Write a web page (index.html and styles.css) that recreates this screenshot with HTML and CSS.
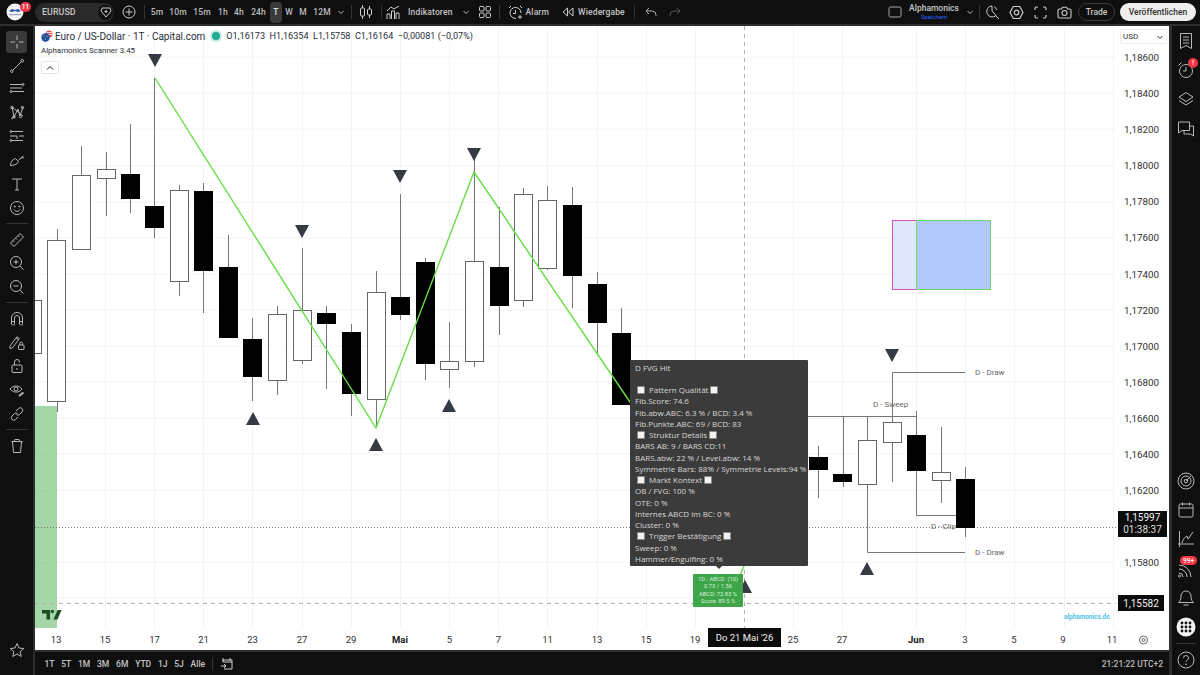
FILE: index.html
```html
<!DOCTYPE html>
<html lang="de">
<head>
<meta charset="utf-8">
<title>EURUSD Chart</title>
<link rel="stylesheet" href="styles.css">
</head>
<body>
<div class="app">
  <header class="topbar">
    <div class="logo">
      <svg class="logo-img" viewBox="0 0 18 18"><circle cx="9" cy="9" r="8.5" fill="#f2f2f2"/><path d="M3 8l3-2 3 1 3-1 3 2-3 1-3-1-3 1z" fill="#2b56b8"/><rect x="3" y="11" width="12" height="1.2" fill="#9aa6c8"/></svg>
      <span class="badge logo-badge">11</span>
    </div>
    <div class="sym">
      <span class="sym-name">EURUSD</span>
      <span class="sym-btn"><svg width="12" height="12" viewBox="0 0 12 12" fill="none" stroke="#ccc"><path d="M2 2h8l1 3-5 6-5-6z"/><path d="M4.5 5.5h3M6 4v3"/></svg></span>
    </div>
    <svg class="plus" width="14" height="14" viewBox="0 0 14 14" fill="none" stroke="#ccc"><circle cx="7" cy="7" r="6"/><path d="M7 3.5v7M3.5 7h7"/></svg>
    <span class="sep s-tf"></span>
    <nav class="tfs">
      <span class="tf w20">5m</span><span class="tf w22">10m</span><span class="tf w26">15m</span><span class="tf w16">1h</span><span class="tf w16">4h</span><span class="tf w23">24h</span><span class="tf w12 active">T</span><span class="tf w14">W</span><span class="tf w14">M</span><span class="tf w24">12M</span>
      <span class="tf w14"><svg class="chev" viewBox="0 0 8 8" fill="none" stroke="#bbb"><path d="M1.5 3l2.500 2.500 2.500-2.500"/></svg></span>
    </nav>
    <span class="sep s3"></span>
    <svg class="ic m6" width="16" height="16" viewBox="0 0 16 16" fill="none" stroke="#ccc"><path d="M4.500 1v3M4.500 12v3M11.500 2v3M11.500 11v3"/><rect x="2.500" y="4" width="4" height="8" rx="1"/><rect x="9.500" y="5" width="4" height="6" rx="1"/></svg>
    <span class="sep s7"></span>
    <svg class="ic m4" width="15" height="15" viewBox="0 0 15 15" fill="none" stroke="#ccc"><path d="M1 14V9h3v5M5.500 14V6h3v8M10 14V8h3v6"/><path d="M1 6l4-4 3 2 5-3"/></svg>
    <span class="lbl l7">Indikatoren</span>
    <svg class="chev m9" viewBox="0 0 8 8" fill="none" stroke="#bbb"><path d="M1.500 3l2.500 2.500 2.500-2.500"/></svg>
    <svg class="ic m8" width="14" height="14" viewBox="0 0 14 14" fill="none" stroke="#ccc"><rect x="1.500" y="1.500" width="4.500" height="4.500" rx="1"/><rect x="8" y="1.500" width="4.500" height="4.500" rx="1"/><rect x="1.500" y="8" width="4.500" height="4.500" rx="1"/><rect x="8" y="8" width="4.500" height="4.500" rx="1"/></svg>
    <span class="sep s7"></span>
    <svg class="ic m8" width="15" height="15" viewBox="0 0 15 15" fill="none" stroke="#ccc"><path d="M8 13.400A5.500 5.500 0 1 1 13 8"/><path d="M7.500 5v3.500H5M1 3l2-2M14 3l-2-2M12 10v4M10 12h4"/></svg>
    <span class="lbl l3">Alarm</span>
    <svg class="ic m13" width="12" height="12" viewBox="0 0 12 12" fill="none" stroke="#ccc"><path d="M5.500 2L1 6l4.500 4zM11 2L6.500 6l4.500 4z"/></svg>
    <span class="lbl l4">Wiedergabe</span>
    <span class="sep s9"></span>
    <svg class="ic m9" width="14" height="14" viewBox="0 0 14 14" fill="none" stroke="#aaa"><path d="M5 3L2 6l3 3M2 6h6a4 4 0 0 1 4 4v1"/></svg>
    <svg class="ic m10" width="14" height="14" viewBox="0 0 14 14" fill="none" stroke="#555"><path d="M9 3l3 3-3 3M12 6H6a4 4 0 0 0-4 4v1"/></svg>
    <div class="top-right">
      <svg class="ic" width="14" height="12" viewBox="0 0 14 12" fill="none" stroke="#aaa"><rect x="1" y="1" width="12" height="10" rx="1.500"/></svg>
      <div class="layout-name"><span class="ln-main">Alphamonics</span><span class="ln-sub">Speichern</span></div>
      <svg class="chev" viewBox="0 0 8 8" fill="none" stroke="#bbb"><path d="M1.500 3l2.500 2.500 2.500-2.500"/></svg>
      <span class="sep s5"></span>
      <span class="ib"><svg width="15" height="15" viewBox="0 0 15 15" fill="none" stroke="#ccc"><path d="M7 1a5.500 5.500 0 1 0 4 9.500M7 1v5l4 4.500M9.500 1.500L12 5M10.500 10.500l3.500 3.500"/></svg></span>
      <span class="ib"><svg width="15" height="15" viewBox="0 0 15 15" fill="none" stroke="#ccc" stroke-width="1.200"><path d="M4.300 1.500h6.400l3.300 6-3.300 6H4.300L1 7.500z"/><circle cx="7.500" cy="7.500" r="2.300"/></svg></span>
      <span class="ib"><svg width="13" height="13" viewBox="0 0 13 13" fill="none" stroke="#ccc" stroke-width="1.200"><path d="M1 4V2.500A1.500 1.500 0 0 1 2.500 1H4M9 1h1.500A1.500 1.500 0 0 1 12 2.500V4M12 9v1.500a1.500 1.500 0 0 1-1.500 1.500H9M4 12H2.500A1.500 1.500 0 0 1 1 10.500V9"/></svg></span>
      <span class="ib"><svg width="15" height="13" viewBox="0 0 15 13" fill="none" stroke="#ccc" stroke-width="1.100"><path d="M1 4.500A1.500 1.500 0 0 1 2.500 3H4.500L5.500 1.200h4L10.500 3h2A1.500 1.500 0 0 1 14 4.500v6a1.500 1.500 0 0 1-1.500 1.500h-10A1.500 1.500 0 0 1 1 10.500z"/><circle cx="7.500" cy="7" r="2.500"/></svg></span>
      <span class="pill trade">Trade</span>
      <span class="pill publish">Veröffentlichen</span>
    </div>
  </header>

  <aside class="left">
    <span class="tool active"><svg viewBox="0 0 16 16" class="ti"><path d="M8 1.500v4.500M8 10v4.500M1.500 8H6M10 8h4.500"/></svg></span>
    <span class="tool"><svg viewBox="0 0 16 16" class="ti"><path d="M3.500 12.500l9-9"/><circle cx="2.800" cy="13.200" r="1.300"/><circle cx="13.200" cy="2.800" r="1.300"/></svg></span>
    <span class="tool"><svg viewBox="0 0 16 16" class="ti"><path d="M1 3.500h12M1 7h12M3 10.500h12"/><circle cx="14" cy="3.500" r="1"/><circle cx="2" cy="10.500" r="1"/></svg></span>
    <span class="tool"><svg viewBox="0 0 16 16" class="ti"><path d="M3 2l2 10 4-8 2 7 3-9M3 2l11 9M5 12L2 14"/><circle cx="3" cy="2.500" r="1.200"/><circle cx="13.500" cy="2.500" r="1.200"/><circle cx="5" cy="12" r="1.200"/><circle cx="11.500" cy="11.500" r="1.200"/></svg></span>
    <span class="tool"><svg viewBox="0 0 16 16" class="ti"><path d="M3 2.500h11M1 7h7M10 7h5M3 11.500h11M8 7v3"/><circle cx="2" cy="2.500" r="1"/><circle cx="2" cy="11.500" r="1"/></svg></span>
    <span class="tool"><svg viewBox="0 0 16 16" class="ti"><path d="M1.500 13.500c0-3 1.500-6 5-7l3 3c-1 3-5 4-8 4zM9.500 8l5-4M12 6c1-.5 2-.5 3 0"/></svg></span>
    <span class="tool"><svg viewBox="0 0 16 16" class="ti"><path d="M3 3h10M8 3v11M6 14h4"/></svg></span>
    <span class="tool"><svg viewBox="0 0 16 16" class="ti"><circle cx="8" cy="8" r="6.500"/><circle cx="5.800" cy="6.500" r=".6"/><circle cx="10.200" cy="6.500" r=".6"/><path d="M5 9.500c1.500 2.500 4.500 2.500 6 0"/></svg></span>
    <span class="tsep"></span>
    <span class="tool"><svg viewBox="0 0 16 16" class="ti"><path d="M1.500 11l9.500-9.500 3.500 3.500L5 14.500zM4 8.500l1.500 1.500M6.500 6l1.500 1.500M9 3.500L10.500 5"/></svg></span>
    <span class="tool"><svg viewBox="0 0 16 16" class="ti"><circle cx="7" cy="7" r="5.500"/><path d="M11 11l3.500 3.500M4.500 7h5M7 4.500v5"/></svg></span>
    <span class="tool"><svg viewBox="0 0 16 16" class="ti"><circle cx="7" cy="7" r="5.500"/><path d="M11 11l3.500 3.500M4.500 7h5"/></svg></span>
    <span class="tsep"></span>
    <span class="tool"><svg viewBox="0 0 16 16" class="ti"><path d="M2.500 13V7a5.500 5.500 0 0 1 11 0v6M5.500 13V7a2.500 2.500 0 0 1 5 0v6M2.500 10.500h3M10.500 10.500h3M3 13v1.500M5 13v1.500M11 13v1.500M13 13v1.500"/></svg></span>
    <span class="tool"><svg viewBox="0 0 16 16" class="ti"><path d="M1 11L7 3l2.500 1.800-6 8L1 13.500zM7 3l1-1.200 2.500 1.800-1 1.200"/><rect x="9.500" y="10" width="5.500" height="4.500" rx=".7"/><path d="M10.800 10V8.500a1.400 1.400 0 0 1 2.800 0V10"/></svg></span>
    <span class="tool"><svg viewBox="0 0 16 16" class="ti"><rect x="3" y="7" width="10" height="7.500" rx="1"/><path d="M5.500 7V4a2.500 2.500 0 0 1 5 0v.5M8 10v2"/></svg></span>
    <span class="tool"><svg viewBox="0 0 16 16" class="ti"><path d="M1 7c3-4 9-4 12 0-1 1.500-2.500 2.500-4.500 3-2.500.5-5.500-.5-7.500-3z"/><circle cx="7" cy="7" r="2"/><path d="M10 14l4.500-3.500" stroke-width="2"/></svg></span>
    <span class="tool"><svg viewBox="0 0 16 16" class="ti"><path d="M7 5l2.500-2.500a2.300 2.300 0 0 1 3.500 3.500L10.500 8.500a2.300 2.300 0 0 1-3 0M9 11l-2.500 2.500A2.300 2.300 0 0 1 3 10l2.500-2.500a2.300 2.300 0 0 1 3 0"/></svg></span>
    <span class="tsep"></span>
    <span class="tool"><svg viewBox="0 0 16 16" class="ti"><path d="M2.500 3.500h11M5.500 3.500V2.200A.7.700 0 0 1 6.200 1.500h3.600a.7.700 0 0 1 .7.700v1.300M3.500 3.500l1 11h7l1-11"/></svg></span>
    <span class="tool star"><svg viewBox="0 0 16 16" class="ti"><path d="M8 1.500l2 4.500 4.800.5-3.600 3.200 1 4.800L8 12l-4.200 2.500 1-4.800L1.200 6.500 6 6z"/></svg></span>
  </aside>

  <main class="chart">
    <svg class="plot" viewBox="35 26 1134 624" xmlns="http://www.w3.org/2000/svg">
      <g class="grid">
        <path d="M35 57H1116M35 93H1116M35 129H1116M35 166H1116M35 202H1116M35 238H1116M35 274H1116M35 310H1116M35 346H1116M35 382H1116M35 418H1116M35 454H1116M35 490H1116M35 562H1116M35 598H1116"/>
        <path d="M105.500 26V628M154.500 26V628M203.500 26V628M252.500 26V628M302.500 26V628M351.500 26V628M400.500 26V628M449.500 26V628M498.500 26V628M547.500 26V628M597.500 26V628M646.500 26V628M695.500 26V628M793.500 26V628M842.500 26V628M916.500 26V628M965.500 26V628M1014.500 26V628M1064.500 26V628M1113.500 26V628"/>
      </g>
      <rect class="zone" x="35" y="406" width="22" height="222"/>
      <path class="zone-line" d="M35 454H57M35 491H57M35 563H57"/>
      <path class="lastline" d="M35 527.500H1116"/>
      <path class="cross" d="M744.500 26V628M35 603.500H1116"/>

      <g class="rects">
        <rect class="r1" x="892.500" y="220.500" width="24" height="69"/>
        <rect class="r2" x="916.500" y="220.500" width="74" height="69"/>
      </g>

      <path class="wick" d="M32.500 280V300M32.500 354V380M57.500 229V240M57.500 401V412M81.500 146V175M106.500 152V169M106.500 178V216M130.500 124V174M130.500 199V213M154.500 78V206M154.500 228V238M179.500 185V190M179.500 281V296M203.500 183V191M203.500 271V313M228.500 235V267M252.500 318V339M252.500 377V401M277.500 306V314M277.500 380V395M302.500 248V310M302.500 360V364M326.500 306V313M326.500 324V389M351.500 324V332M351.500 394V416M376.500 271V292M376.500 399V426M400.500 194V297M400.500 315V320M425.500 258V262M425.500 364V380M449.500 322V361M449.500 369V388M474.500 157V261M474.500 361V367M499.500 207V267M499.500 306V335M523.500 188V194M523.500 300V307M547.500 186V200M547.500 268V270M572.500 187V205M572.500 276V308M597.500 272V284M597.500 323V353M621.500 308V333M818.500 446V457M818.500 470V498M843.500 417V474M843.500 482V487M867.500 417V440M867.500 485V552.500H965M892.500 372.500V422M892.500 442V482M916.500 411V435M916.500 471V515.500H965M941.500 427V472M941.500 480V503M965.500 467V479M965.500 528V537M892.500 372.500H965M808 416.500H916"/>

      <g class="up">
        <rect x="24.500" y="300.500" width="17" height="53"/>
        <rect x="47.500" y="240.500" width="18" height="161"/>
        <rect x="72.500" y="175.500" width="18" height="74"/>
        <rect x="97.500" y="169.500" width="18" height="9"/>
        <rect x="170.500" y="190.500" width="18" height="91"/>
        <rect x="268.500" y="314.500" width="18" height="66"/>
        <rect x="293.500" y="310.500" width="18" height="50"/>
        <rect x="367.500" y="292.500" width="18" height="107"/>
        <rect x="440.500" y="361.500" width="18" height="8"/>
        <rect x="465.500" y="261.500" width="18" height="100"/>
        <rect x="514.500" y="194.500" width="18" height="106"/>
        <rect x="538.500" y="200.500" width="18" height="68"/>
        <rect x="858.500" y="440.500" width="18" height="44"/>
        <rect x="883.500" y="422.500" width="18" height="20"/>
        <rect x="932.500" y="472.500" width="18" height="8"/>
      </g>
      <g class="dn">
        <rect x="121" y="174" width="19" height="25"/>
        <rect x="145" y="206" width="19" height="22"/>
        <rect x="194" y="191" width="19" height="80"/>
        <rect x="219" y="267" width="19" height="71"/>
        <rect x="243" y="339" width="19" height="38"/>
        <rect x="317" y="313" width="19" height="11"/>
        <rect x="342" y="332" width="19" height="62"/>
        <rect x="391" y="297" width="19" height="18"/>
        <rect x="416" y="262" width="19" height="102"/>
        <rect x="490" y="267" width="19" height="39"/>
        <rect x="563" y="205" width="19" height="71"/>
        <rect x="588" y="284" width="19" height="39"/>
        <rect x="612" y="333" width="19" height="72"/>
        <rect x="809" y="457" width="19" height="13"/>
        <rect x="833" y="474" width="19" height="8"/>
        <rect x="907" y="435" width="19" height="36"/>
        <rect x="956" y="479" width="19" height="49"/>
      </g>

      <path class="zig" d="M155 78L376 428L474 172L632 405L744 566L740 575"/>

      <g class="tri">
        <path d="M148 54h14l-7 13z"/><path d="M295 225h14l-7 13z"/><path d="M393 170h14l-7 13z"/><path d="M467 148h14l-7 13z"/><path d="M885 349h14l-7 13z"/>
        <path d="M246 425h14l-7-13z"/><path d="M369 451h14l-7-13z"/><path d="M442 412h14l-7-13z"/><path d="M738 593h14l-7-13z"/><path d="M860 575h14l-7-13z"/>
      </g>

      <path class="tvlogo" d="M42 610h8v9.500h-3.500V613.500H42zM50.500 611.500a1.800 1.800 0 1 0 3.600 0a1.800 1.800 0 1 0-3.600 0zM57.500 610H61.500L57.500 619.500H53.500z"/>

      <g class="draws">
        <text x="975" y="375">D - Draw</text>
        <text x="975" y="555">D - Draw</text>
        <text x="873" y="407">D - Sweep</text>
        <text x="931" y="529">D - Clip</text>
      </g>
      <rect x="956" y="479" width="19" height="49" class="dn-top"/>
      <text class="brand" x="1064" y="619">alphamonics.de</text>

      <g class="prices">
        <text x="1124" y="60.500">1,18600</text><text x="1124" y="96.500">1,18400</text><text x="1124" y="132.500">1,18200</text><text x="1124" y="169">1,18000</text><text x="1124" y="205">1,17800</text><text x="1124" y="241">1,17600</text><text x="1124" y="277.500">1,17400</text><text x="1124" y="313.500">1,17200</text><text x="1124" y="349.500">1,17000</text><text x="1124" y="385.500">1,16800</text><text x="1124" y="421.500">1,16600</text><text x="1124" y="457.500">1,16400</text><text x="1124" y="493.500">1,16200</text><text x="1124" y="565.500">1,15800</text>
      </g>
      <g class="dates">
        <text x="56" y="643">13</text><text x="105" y="643">15</text><text x="154.500" y="643">17</text><text x="203.500" y="643">21</text><text x="252.500" y="643">23</text><text x="302" y="643">27</text><text x="351" y="643">29</text><text x="400" y="643" class="bold">Mai</text><text x="449.500" y="643">5</text><text x="498.500" y="643">7</text><text x="547.500" y="643">11</text><text x="597" y="643">13</text><text x="646" y="643">15</text><text x="695" y="643">19</text><text x="793" y="643">25</text><text x="842" y="643">27</text><text x="916" y="643" class="bold">Jun</text><text x="965" y="643">3</text><text x="1014" y="643">5</text><text x="1063" y="643">9</text><text x="1112" y="643">11</text>
      </g>
      <g class="settings"><circle cx="1143.500" cy="640" r="4"/><circle cx="1143.500" cy="640" r="1.500"/></g>
    </svg>

    <div class="legend">
      <div class="legend-main">
        <svg class="flags" width="12" height="12" viewBox="0 0 12 12"><circle cx="8" cy="4" r="3.500" fill="#d9505a"/><path d="M5.500 2.500h6M5 4.500h6.500" stroke="#fff" stroke-width=".8"/><circle cx="4.500" cy="7.500" r="4.200" fill="#1f4fa3"/><circle cx="3" cy="6" r=".6" fill="#ffd84d"/><circle cx="6" cy="6" r=".6" fill="#ffd84d"/><circle cx="4.500" cy="9" r=".6" fill="#ffd84d"/></svg>
        <span class="legend-title">Euro / US-Dollar · 1T · Capital.com</span>
        <span class="status"></span>
        <span class="ohlc">O1,16173 &nbsp;H1,16354 &nbsp;L1,15758 &nbsp;C1,16164 &nbsp;−0,00081 (−0,07%)</span>
      </div>
      <div class="legend-ind">Alphamonics Scanner 3.45</div>
      <span class="collapse"><svg width="8" height="6" viewBox="0 0 8 6" fill="none" stroke="#131722"><path d="M1 4.500l3-3 3 3"/></svg></span>
    </div>

    <div class="currency"><span>USD</span><svg class="chev dark" viewBox="0 0 8 8" fill="none" stroke="#333"><path d="M1.500 3l2.500 2.500 2.500-2.500"/></svg></div>

    <div class="tag last"><span>1,15997</span><span class="sub">01:38:37</span></div>
    <div class="tag cross-price"><span>1,15582</span></div>
    <div class="tag cross-date">Do 21 Mai '26</div>

    <div class="tooltip">
      <div class="row">D FVG Hit</div>
      <div class="row">&nbsp;</div>
      <div class="row head"><i class="sq"></i>Pattern Qualität<i class="sq"></i></div>
      <div class="row">Fib.Score: 74.6</div>
      <div class="row">Fib.abw.ABC: 6.3 % / BCD: 3.4 %</div>
      <div class="row">Fib.Punkte.ABC: 69 / BCD: 83</div>
      <div class="row head"><i class="sq"></i>Struktur Details<i class="sq"></i></div>
      <div class="row">BARS AB: 9 / BARS CD:11</div>
      <div class="row">BARS.abw: 22 % / Level.abw: 14 %</div>
      <div class="row">Symmetrie Bars: 88% / Symmetrie Levels:94 %</div>
      <div class="row head"><i class="sq"></i>Markt Kontext<i class="sq"></i></div>
      <div class="row">OB / FVG: 100 %</div>
      <div class="row">OTE: 0 %</div>
      <div class="row">Internes ABCD im BC: 0 %</div>
      <div class="row">Cluster: 0 %</div>
      <div class="row head"><i class="sq"></i>Trigger Bestätigung<i class="sq"></i></div>
      <div class="row">Sweep: 0 %</div>
      <div class="row">Hammer/Engulfing: 0 %</div>
    </div>

    <div class="greenlabel">
      <span>1D - ABCD &nbsp;(10)</span>
      <span>0.73 / 1.56</span>
      <span>ABCD: 72.83 %</span>
      <span>Score: 89.5 %</span>
    </div>
  </main>

  <aside class="right">
    <div class="rt-group">
      <span class="rtool"><svg viewBox="0 0 18 18" class="ri"><path d="M3.500 1.500h11v15l-5.500-3-5.500 3zM6 5h6M6 8h6M6 11h6"/></svg></span>
      <span class="rtool"><svg viewBox="0 0 18 18" class="ri"><circle cx="9" cy="10" r="6.500"/><path d="M9 6v4H6M1.500 4.500l3-3"/></svg><span class="badge rbadge">!</span></span>
      <span class="rtool"><svg viewBox="0 0 18 18" class="ri"><path d="M9 2.500l7 4.500-7 4.500L2 7zM2 10.500l7 4.500 7-4.500"/></svg></span>
      <span class="rtool"><svg viewBox="0 0 18 18" class="ri"><path d="M1.500 2h11v8.500H5l-3.500 2.500zM13 6h3.500v10l-3-2H7v-3"/></svg></span>
    </div>
    <div class="rt-group">
      <span class="rtool"><svg viewBox="0 0 18 18" class="ri"><circle cx="9" cy="9" r="8"/><circle cx="9" cy="9" r="5"/><circle cx="9" cy="9" r="1.800"/><path d="M9 9l5-5"/></svg></span>
      <span class="rtool"><svg viewBox="0 0 18 18" class="ri"><rect x="2" y="3" width="14" height="13" rx="1.500"/><path d="M2 7h14M5.500 1.500v3M12.500 1.500v3"/></svg></span>
      <span class="rtool"><svg viewBox="0 0 18 18" class="ri"><path d="M2.500 1v16M1 14h16M5 13c1-4 3-6 5-7l1 3 5-7"/></svg></span>
      <span class="rtool"><svg viewBox="0 0 18 18" class="ri"><path d="M2 9a8 8 0 0 1 8 8M2 13a4 4 0 0 1 4 4M2 5a12 12 0 0 1 12 12"/><circle cx="2.500" cy="16" r="1"/></svg><span class="badge rbadge2">99+</span></span>
      <span class="rtool"><svg viewBox="0 0 18 18" class="ri"><path d="M9 2a5 5 0 0 1 5 5c0 4 1 5 2.500 6.500h-15C3 12 4 11 4 7a5 5 0 0 1 5-5zM6.500 16h5"/></svg></span>
      <span class="rtool"><svg viewBox="0 0 20 20" class="dots"><circle cx="10" cy="10" r="9.500" fill="#f2f2f2"/><g fill="#131313"><circle cx="6" cy="6" r="1.400"/><circle cx="10" cy="6" r="1.400"/><circle cx="14" cy="6" r="1.400"/><circle cx="6" cy="10" r="1.400"/><circle cx="10" cy="10" r="1.400"/><circle cx="14" cy="10" r="1.400"/><circle cx="6" cy="14" r="1.400"/><circle cx="10" cy="14" r="1.400"/><circle cx="14" cy="14" r="1.400"/></g></svg></span>
      <span class="rsep"></span>
      <span class="rtool help"><svg viewBox="0 0 18 18" class="ri"><circle cx="9" cy="9" r="8"/><path d="M6.500 7a2.500 2.500 0 1 1 3.700 2.200C9.300 9.700 9 10.200 9 11"/><circle cx="9" cy="13.300" r=".5"/></svg></span>
    </div>
  </aside>

  <footer class="bottom">
    <nav class="ranges">
      <span class="rg">1T</span><span class="rg">5T</span><span class="rg">1M</span><span class="rg">3M</span><span class="rg">6M</span><span class="rg">YTD</span><span class="rg">1J</span><span class="rg">5J</span><span class="rg">Alle</span>
      <span class="sep b-sep"></span>
      <svg class="ic b-cal" width="14" height="14" viewBox="0 0 14 14" fill="none" stroke="#ccc"><path d="M3 5V3h9v9H4M3 1v3M10 1v3M3 5h9M1 9h5M4 7l2 2-2 2"/></svg>
    </nav>
    <span class="clock">21:21:22 UTC+2</span>
  </footer>
</div>
</body>
</html>
```

FILE: styles.css
```css
* { box-sizing: border-box; }
html, body { margin: 0; height: 100%; overflow: hidden; }
body { background: #2e2e2e; font-family: "Roboto", "Liberation Sans", sans-serif; color: #ccc; }

.app {
  width: 1200px; height: 675px;
  display: grid;
  grid-template-columns: 33px 1134px 29px;
  grid-template-rows: 24px 624px 23px;
  gap: 2px;
  grid-template-areas:
    "top top top"
    "left chart right"
    "left bottom right";
}

/* top bar */
.topbar { grid-area: top; background: #0f0f0f; display: flex; align-items: center; padding-left: 6px; padding-right: 4px; font-size: 9px; }
.logo { position: relative; width: 18px; height: 18px; flex: none; }
.logo-img { width: 18px; height: 18px; display: block; }
.badge { position: absolute; background: #f23645; color: #fff; font-size: 6.500px; font-weight: 500; border-radius: 6px; display: flex; align-items: center; justify-content: center; }
.logo-badge { left: 14px; top: -1px; width: 11px; height: 10px; }
.sym { margin-left: 11px; width: 79px; height: 19px; border-radius: 10px; background: #2a2a2a; display: flex; align-items: center; justify-content: space-between; padding-left: 7px; padding-right: 1px; flex: none; }
.sym-name { font-weight: 500; color: #c8c8c8; font-size: 8.800px; letter-spacing: .1px; }
.sym-btn { width: 15px; height: 15px; border-radius: 50%; background: #0f0f0f; display: flex; align-items: center; justify-content: center; }
.plus { margin-left: 8px; flex: none; }
.sep { width: 1px; height: 14px; background: #333; flex: none; display: block; }
.s-tf { margin-left: 8px; }
.s3 { margin-left: 3px; }
.s5 { margin-left: 5px; }
.s7 { margin-left: 7px; }
.s9 { margin-left: 9px; }
.tfs { display: flex; align-items: center; height: 24px; margin-left: 2px; flex: none; }
.tf { display: flex; align-items: center; justify-content: center; color: #bdbdbd; font-weight: 500; font-size: 8.500px; letter-spacing: .1px; height: 21px; flex: none; }
.tf.active { background: #3a3a3a; border-radius: 4px; color: #e0e0e0; }
.w12 { width: 12px; } .w14 { width: 14px; } .w16 { width: 16px; } .w20 { width: 20px; } .w22 { width: 22px; } .w23 { width: 23px; } .w24 { width: 24px; } .w26 { width: 26px; }
.ic { flex: none; display: block; }
.chev { width: 8px; height: 8px; flex: none; display: block; }
.m4 { margin-left: 4px; } .m6 { margin-left: 6px; } .m7 { margin-left: 7px; } .m8 { margin-left: 8px; } .m9 { margin-left: 9px; } .m10 { margin-left: 10px; } .m13 { margin-left: 13px; }
.lbl { font-weight: 500; color: #c4c4c4; font-size: 8.500px; letter-spacing: .15px; white-space: nowrap; flex: none; }
.l3 { margin-left: 3px; } .l4 { margin-left: 4px; } .l7 { margin-left: 7px; }
.top-right { margin-left: auto; display: flex; align-items: center; flex: none; }
.layout-name { width: 64px; display: flex; flex-direction: column; align-items: center; line-height: 1; }
.ln-main { color: #c8c8c8; font-size: 8.500px; font-weight: 500; }
.ln-sub { color: #2962ff; font-size: 6px; margin-top: 1px; }
.ib { width: 24px; display: flex; justify-content: center; flex: none; }
.pill { border-radius: 10px; height: 18px; display: flex; align-items: center; justify-content: center; font-size: 8.500px; font-weight: 500; flex: none; }
.trade { width: 37px; margin-left: 2px; border: 1px solid #3c3c3c; color: #c8c8c8; }
.publish { width: 76px; margin-left: 5px; background: #eee; color: #333; }

/* left toolbar */
.left { grid-area: left; background: #0f0f0f; display: flex; flex-direction: column; align-items: center; padding-top: 4px; position: relative; }
.tool { width: 21px; height: 23.700px; display: flex; align-items: center; justify-content: center; flex: none; }
.tool.active { background: none; position: relative; }
.tool.active::before { content: ""; position: absolute; inset: 1px 0; background: #3a3a3a; border-radius: 3px; }
.tool.active .ti { position: relative; }
.ti { width: 16px; height: 16px; fill: none; stroke: #b8b8b8; stroke-width: 1; display: block; }
.tsep { width: 22px; height: 1px; background: #333; margin: 3.650px 0; flex: none; }
.star { margin-top: auto; margin-bottom: 13px; }

/* chart */
.chart { grid-area: chart; background: #fff; position: relative; overflow: hidden; }
.plot { width: 1134px; height: 624px; display: block; font-family: "Roboto", "Liberation Sans", sans-serif; }
.grid path { stroke: #f3f3f3; stroke-width: 1; fill: none; }
.zone { fill: #a5d6a7; }
.zone-line { stroke: #8fc491; stroke-dasharray: 1 2; fill: none; }
.lastline { stroke: #777; stroke-dasharray: 1 2; fill: none; }
.cross { stroke: #b0b0b0; stroke-dasharray: 4 4; fill: none; }
.r1 { fill: #dfe7fb; stroke: #d54fc8; }
.r2 { fill: #b2c7fb; stroke: #6fd66f; }
.wick { stroke: #777; stroke-width: 1; fill: none; }
.up rect { fill: #fff; stroke: #666; stroke-width: 1; }
.dn rect, .dn-top { fill: #000; }
.zig { stroke: #66dd44; stroke-width: 1.400; fill: none; }
.tri path { fill: #363a45; }
.tvlogo { fill: #1d4d22; }
.draws text { font-size: 8px; fill: #666; }
.brand { font-size: 6.400px; font-weight: 700; fill: #4fc3e8; }
.prices text { font-size: 9.800px; fill: #2f2f2f; }
.dates text { font-size: 9.500px; fill: #2f2f2f; text-anchor: middle; }
.dates .bold { font-weight: 700; fill: #131722; }
.settings circle { fill: none; stroke: #666; }

.legend { position: absolute; left: 6px; top: 3px; color: #131722; }
.legend-main { display: flex; align-items: center; height: 14px; }
.flags { flex: none; }
.legend-title { margin-left: 2px; font-size: 10px; color: #2a2e39; white-space: nowrap; }
.status { width: 8px; height: 8px; border-radius: 50%; background: #22ab94; box-shadow: 0 0 0 2px #c8ebe4; margin-left: 7px; margin-right: 6px; flex: none; }
.ohlc { font-size: 9.100px; color: #2a2e39; white-space: nowrap; }
.legend-ind { font-size: 7.900px; color: #2a2e39; margin-top: 1px; line-height: 14px; }
.collapse { width: 18px; height: 13px; border: 1px solid #e6e6e6; border-radius: 2px; display: flex; align-items: center; justify-content: center; margin-top: 3px; background: #fff; }

.currency { position: absolute; left: 1085px; top: 3px; width: 47px; height: 15px; border: 1px solid #eee; border-radius: 2px; display: flex; align-items: center; justify-content: space-between; padding: 0 2px; font-size: 8px; color: #333; background: #fff; }

.tag { position: absolute; background: #0c0c0c; color: #f0f0f0; display: flex; flex-direction: column; align-items: center; justify-content: center; font-size: 10px; line-height: 13px; white-space: nowrap; }
.tag.last { left: 1083px; top: 485px; width: 49px; height: 26px; line-height: 12.500px; }
.tag .sub { color: #ddd; }
.tag.cross-price { left: 1083px; top: 569px; width: 46px; height: 16px; }
.tag.cross-date { left: 673px; top: 602px; width: 73px; height: 19px; font-size: 9.500px; font-weight: 400; }

.tooltip { position: absolute; left: 595px; top: 334px; width: 178px; height: 206px; padding: 1.500px 0 0 5px; background: #3b3b3b; color: #d8d8d8; font-family: "Open Sans", "Liberation Sans", sans-serif; font-size: 8px; border-radius: 1px; }
.tooltip::after { content: ""; position: absolute; left: 86px; bottom: -3px; border-left: 3px solid transparent; border-right: 3px solid transparent; border-top: 3px solid #3b3b3b; }
.row { height: 11.250px; line-height: 11.250px; white-space: nowrap; }
.head { display: flex; align-items: center; }
.sq { width: 8px; height: 8px; background: #f2f2f2; border: 1px solid #8a8a8a; border-radius: 1px; margin: 0 4px 0 2px; flex: none; display: block; }
.greenlabel { position: absolute; left: 658px; top: 548px; width: 50px; height: 33px; background: #3ea54a; color: #d8f0d8; font-size: 5.800px; display: flex; flex-direction: column; align-items: center; justify-content: center; line-height: 7.300px; white-space: nowrap; border-radius: 1px; }

/* right toolbar */
.right { grid-area: right; background: #0f0f0f; border-left: 1px solid #2e2e2e; display: flex; flex-direction: column; justify-content: space-between; align-items: center; }
.rt-group { display: flex; flex-direction: column; align-items: center; }
.rtool { width: 28px; height: 29.300px; display: flex; align-items: center; justify-content: center; position: relative; flex: none; }
.ri { width: 18px; height: 18px; fill: none; stroke: #b8b8b8; stroke-width: 1; display: block; }
.dots { width: 20px; height: 20px; display: block; }
.rsep { width: 20px; height: 1px; background: #333; margin: 1px 0; flex: none; }
.help { height: 29px; margin-bottom: 1px; }
.rbadge { right: 2px; top: 3px; width: 10px; height: 10px; border-radius: 50%; }
.rbadge2 { left: 8px; top: 2px; width: 17px; height: 9px; }

/* bottom bar */
.bottom { grid-area: bottom; background: #0f0f0f; display: flex; align-items: center; justify-content: space-between; padding-left: 6px; padding-right: 6px; font-size: 8.500px; }
.ranges { display: flex; align-items: center; }
.rg { color: #c4c4c4; font-weight: 500; padding: 0 3.400px; }
.b-sep { margin-left: 3px; }
.b-cal { margin-left: 7px; }
.clock { color: #bbb; font-weight: 500; }
```
